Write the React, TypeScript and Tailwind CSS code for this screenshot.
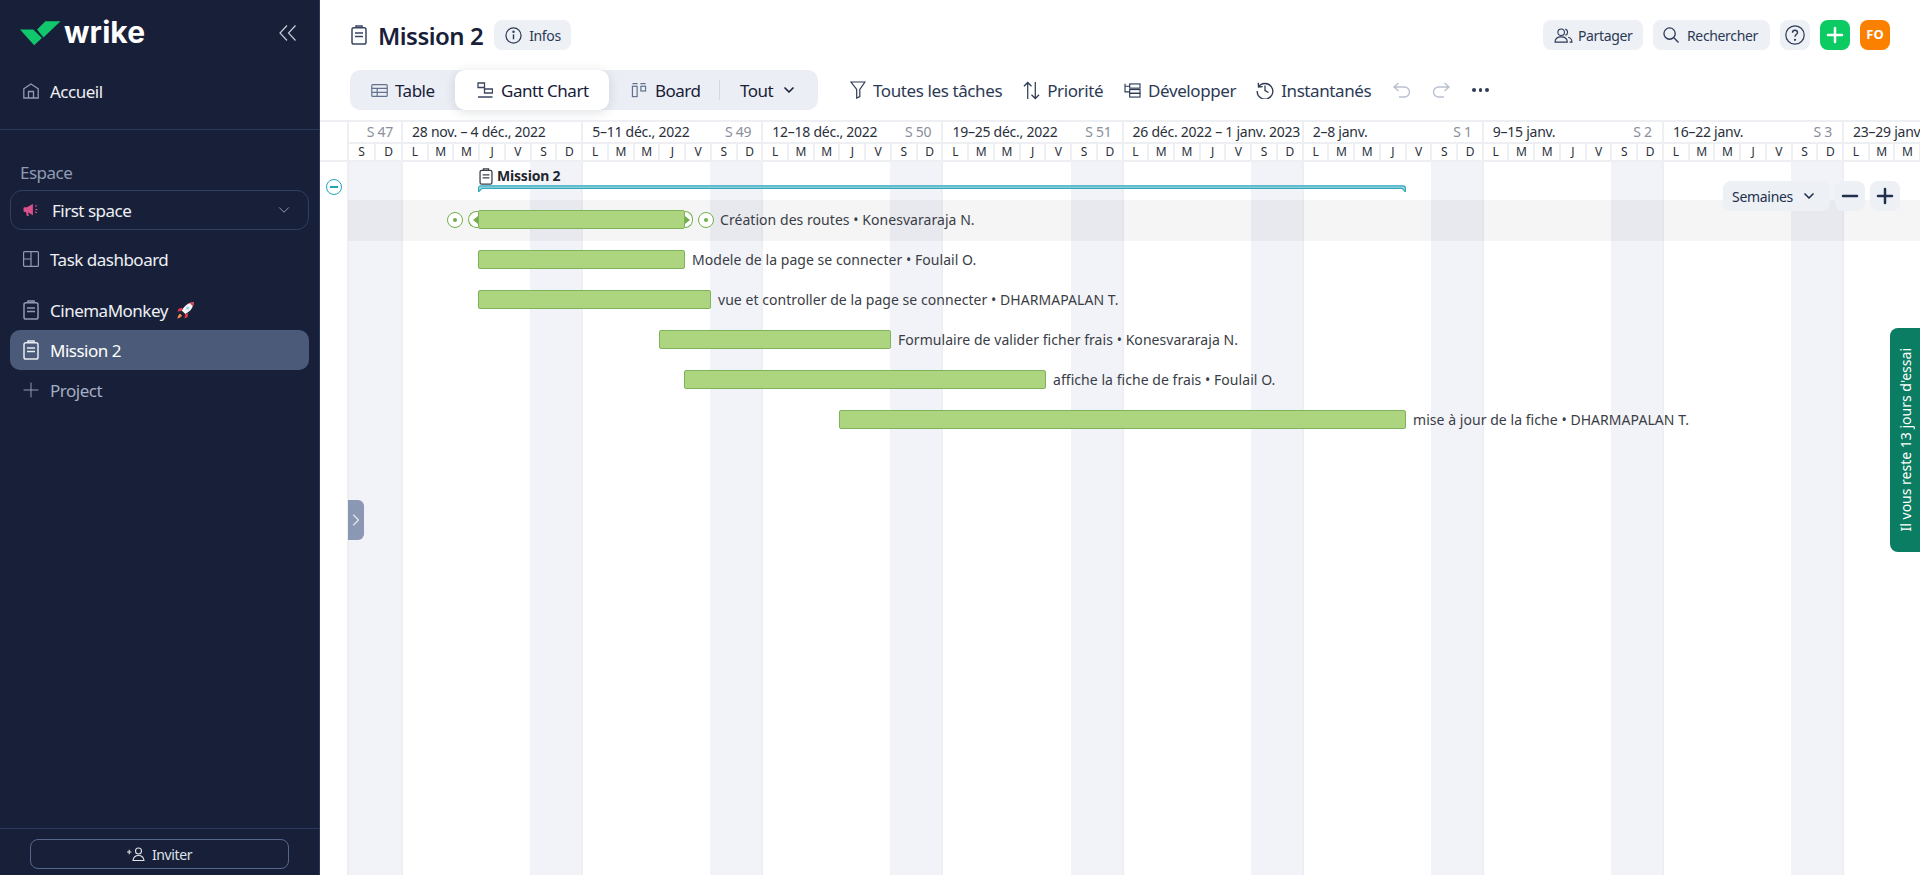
import React from "react";
import { ChevronDown, ChevronRight, Plus, Minus } from "lucide-react";

const F = "[font-family:'Noto_Sans','Open_Sans',sans-serif]";

const Clip = ({ className = "" }: { className?: string }) => (
  <svg viewBox="0 0 16 20" className={className} fill="none" stroke="currentColor" strokeWidth="1.5">
    <rect x="1" y="2.800" width="14" height="16.200" rx="1.800" />
    <path d="M5 2.800V1h6v1.800M4 8h8M4 11.500h8" />
  </svg>
);

const Rocket = () => (
  <svg viewBox="0 0 20 20" className="w-[19px] h-[19px]">
    <path d="M18.6 1.2c-4.3.2-8 2.2-10.4 5.6L6 10l3.8 3.8 3.200-2.200c3.400-2.400 5.400-6.100 5.600-10.400z" fill="#f3f4f6" />
    <path d="M18.600 1.200c-1.500.1-2.900.4-4.200 1l3.200 3.200c.6-1.300.9-2.700 1-4.200z" fill="#e8394d" />
    <path d="M7 7 3 8l-1.500 3 4.500-.5zM13 13l-1 4-3 1.500.5-4.500z" fill="#e8394d" />
    <circle cx="12.300" cy="7.600" r="1.700" fill="#9bd0ea" />
    <path d="M4.500 13.500c-1.500.5-2.500 2-3 4.800 2.800-.5 4.300-1.500 4.800-3z" fill="#f58a4b" />
  </svg>
);

const Megaphone = () => (
  <svg viewBox="0 0 18 16" className="w-[17px] h-[15px]" fill="#d8518a">
    <path d="M10.500 1 4 4.500H1.500A1 1 0 0 0 .5 5.500v3a1 1 0 0 0 1 1H3l1.200 4.500 2-.5-1-3.600 5.300 3.100z" />
    <path d="M12.500 3.200l2-1 .5.900-2 1zM13 6.300h2.500v1.200H13zM12.500 9.800l.5-.9 2 1-.5.900z" />
  </svg>
);

const WrikeLogo = () => (
  <div className="flex items-center gap-[3px]">
    <svg viewBox="0 0 42 26" className="w-[41px] h-[26px]">
      <path d="M0 9.500h13.500l9 8.500-8 7.500z" fill="#10c76c" />
      <path d="M17.500 9.500 26 1h15.500L24 17.500z" fill="#10c76c" />
    </svg>
    <span className="text-white text-[30px] font-bold leading-none [font-family:Inter,sans-serif] tracking-[0.1px] -mt-[2px]">wrike</span>
  </div>
);

const NavRow = ({ icon, label, active, muted, after }: { icon: React.ReactNode; label: string; active?: boolean; muted?: boolean; after?: React.ReactNode }) => (
  <div className={`flex items-center h-10 mx-[10px] pl-[11px] rounded-[10px] ${active ? "bg-[#4a5a78] text-white" : muted ? "text-[#a4aec2]" : "text-[#eef0f5]"}`}>
    <span className={`w-[19px] flex justify-center mr-[10px] ${active ? "text-[#e8ebf1]" : "text-[#8f9bb3]"}`}>{icon}</span>
    <span className="text-[17px] tracking-[-0.5px] pt-px">{label}</span>
    {after && <span className="ml-2">{after}</span>}
  </div>
);

const Sidebar = () => (
  <aside className="w-[320px] shrink-0 h-full bg-[#182039] border-r border-[#2c3b5c] flex flex-col">
    <div className="h-[130px] border-b border-[#2c3b5c] flex flex-col">
      <div className="flex items-center justify-between h-[71px] pl-[20px] pr-[22px] pb-[5px]">
        <WrikeLogo />
        <svg viewBox="0 0 18 16" className="w-[18px] h-[16px]" fill="none" stroke="#c5ccd9" strokeWidth="1.200"><path d="M8 .5 1 8l7 7.500M16.500.5 9.500 8l7 7.500" /></svg>
      </div>
      <NavRow
        label="Accueil"
        icon={<svg viewBox="0 0 16 16" className="w-[16px] h-[16px]" fill="none" stroke="currentColor" strokeWidth="1.300"><path d="M.8 5.800 8 1l7.200 4.800V15H.8zM5.500 15V8.500h5V15" /></svg>}
      />
    </div>
    <div className="pt-[31px] flex-1">
      <div className="pl-[20px] text-[17px] leading-[24px] text-[#8f9bb3] tracking-[-0.5px]">Espace</div>
      <div className="mx-[10px] mt-[5px] h-10 rounded-[12px] border border-[#2f3f60] flex items-center pl-[12px] pr-[15px] text-[#eef0f5]">
        <Megaphone />
        <span className="ml-[12px] text-[17px] tracking-[-0.5px] flex-1 pt-px">First space</span>
        <ChevronDown className="w-[18px] h-[18px] text-[#8f9bb3]" strokeWidth={1.300} />
      </div>
      <div className="mt-[9px]">
        <NavRow
          label="Task dashboard"
          icon={<svg viewBox="0 0 16 16" className="w-[16px] h-[16px]" fill="none" stroke="currentColor" strokeWidth="1.200"><rect x=".6" y=".6" width="14.800" height="14.800" rx="1" /><path d="M8 .6v14.800M.6 8H8" /></svg>}
        />
      </div>
      <div className="mt-[11px]">
        <NavRow label="CinemaMonkey" icon={<Clip className="w-[16px] h-[20px]" />} after={<Rocket />} />
      </div>
      <NavRow label="Mission 2" active icon={<Clip className="w-[16px] h-[20px]" />} />
      <NavRow label="Project" muted icon={<Plus className="w-[24px] h-[24px] shrink-0" strokeWidth={1} />} />
    </div>
    <div className="h-[47px] border-t border-[#2c3b5c] px-[30px] pt-[10px]">
      <div className="h-[30px] rounded-[8px] border border-[#56678a] flex items-center justify-center text-[#dfe3ea] text-[14px] tracking-[-0.4px] gap-[7px]">
        <svg viewBox="0 0 18 14" className="w-[18px] h-[14px]" fill="none" stroke="currentColor" strokeWidth="1.100">
          <path d="M0 5h4.500M2.200 2.800v4.400" />
          <circle cx="11.500" cy="4" r="3" />
          <path d="M6 13.500c.5-3.500 2.500-5 5.500-5s5 1.500 5.500 5z" />
        </svg>
        Inviter
      </div>
    </div>
  </aside>
);

const Pill = ({ children, className = "" }: { children: React.ReactNode; className?: string }) => (
  <div className={`h-[30px] rounded-[8px] bg-[#edf0f5] flex items-center text-[14px] text-[#2c3a55] tracking-[-0.35px] ${className}`}>{children}</div>
);

const TopBar = () => (
  <div className="h-[70px] flex items-start justify-between pt-[20px] pl-[31px] pr-[30px]">
    <div className="flex items-center h-[30px]">
      <Clip className="w-[16px] h-[20px] text-[#3a4660]" />
      <h1 className="ml-[11px] text-[24px] leading-[30px] pt-[2px] font-semibold text-[#182039] tracking-[-0.5px]">Mission 2</h1>
      <Pill className="ml-[11px] w-[77px] pl-[11px] gap-[7px]">
        <svg viewBox="0 0 18 18" className="w-[17px] h-[17px]" fill="none" stroke="#2c3a55" strokeWidth="1.300"><circle cx="9" cy="9" r="8" /><path d="M9 7.800v5.200" strokeWidth="1.500" /><circle cx="9" cy="5" r=".6" fill="#2c3a55" /></svg>
        Infos
      </Pill>
    </div>
    <div className="flex items-center gap-[10px]">
      <Pill className="w-[100px] pl-[11px] gap-[5px]">
        <svg viewBox="0 0 20 16" className="w-[19px] h-[15px]" fill="none" stroke="#2c3a55" strokeWidth="1.200"><circle cx="7.500" cy="4.500" r="3.500" /><path d="M1 15c0-3.500 2.500-5.500 6.500-5.500S14 11.500 14 15z" /><path d="M12 1.200a3.500 3.500 0 0 1 0 6.600M15 9.800c2.500.7 4 2.500 4 5.200h-2.500" /></svg>
        Partager
      </Pill>
      <Pill className="w-[117px] pl-[10px] gap-[8px]">
        <svg viewBox="0 0 17 17" className="w-[16px] h-[16px]" fill="none" stroke="#2c3a55" strokeWidth="1.400"><circle cx="7" cy="7" r="6" /><path d="m11.500 11.500 5 5" /></svg>
        Rechercher
      </Pill>
      <Pill className="w-[30px] justify-center">
        <svg viewBox="0 0 20 20" className="w-[20px] h-[20px]" fill="none" stroke="#2c3a55" strokeWidth="1.200"><circle cx="10" cy="10" r="9.200" /><path d="M7.500 7.800c0-1.500 1.100-2.500 2.500-2.500s2.500 1 2.500 2.300c0 2-2.500 2-2.500 4.200" strokeWidth="1.400" /><circle cx="10" cy="14.800" r=".5" fill="#2c3a55" /></svg>
      </Pill>
      <div className="w-[30px] h-[30px] rounded-[8px] bg-[#0ccb63] flex items-center justify-center">
        <Plus className="w-[24px] h-[24px] text-white" strokeWidth={2.500} />
      </div>
      <div className="w-[30px] h-[30px] rounded-[8px] bg-[#fb8000] flex items-center justify-center text-white text-[13px] font-bold pb-[1px]">FO</div>
    </div>
  </div>
);

const Tab = ({ icon, label, active, className = "" }: { icon: React.ReactNode; label: string; active?: boolean; className?: string }) => (
  <div className={`h-10 flex items-center rounded-[10px] text-[17px] text-[#182039] tracking-[-0.5px] ${active ? "bg-white shadow-[0_2px_12px_rgba(30,40,70,0.14)]" : ""} ${className}`}>
    <span className="text-[#64728f] flex">{icon}</span>
    <span className="pt-[2px]">{label}</span>
  </div>
);

const ToolItem = ({ icon, label, className = "" }: { icon: React.ReactNode; label: string; className?: string }) => (
  <div className={`flex items-center gap-[7px] text-[17px] text-[#2c3a55] tracking-[-0.4px] ${className}`}>
    {icon}
    <span className="pt-[2px]">{label}</span>
  </div>
);

const Toolbar = () => (
  <div className="h-[50px] flex pl-[30px]">
    <div className="w-[468px] h-10 bg-[#ebeef4] rounded-[10px] flex items-center">
      <Tab
        className="w-[105px] pl-[21px] gap-[7px]"
        label="Table"
        icon={<svg viewBox="0 0 18 14" className="w-[17px] h-[13px]" fill="none" stroke="currentColor" strokeWidth="1.300"><rect x=".7" y=".7" width="16.600" height="12.600" rx="1" /><path d="M.7 4.800h16.600M.7 9h16.600M6.500 4.800v8.500" /></svg>}
      />
      <Tab
        active
        className="w-[154px] pl-[22px] gap-[8px]"
        label="Gantt Chart"
        icon={<svg viewBox="0 0 16 16" className="w-[16px] h-[16px] text-[#3a4660]" fill="none" stroke="currentColor" strokeWidth="1.300"><path d="M1 1h6.500v4.500H1zM7.500 7h8v4h-8zM1 15h14.500" /></svg>}
      />
      <Tab
        className="w-[110px] pl-[22px] gap-[8px]"
        label="Board"
        icon={<svg viewBox="0 0 16 16" className="w-[16px] h-[15px]" fill="none" stroke="currentColor" strokeWidth="1.300"><path d="M1 .7h5.500M9.500.7H15" /><rect x="1" y="3.500" width="5" height="11" /><rect x="10" y="3.500" width="5" height="5" /></svg>}
      />
      <div className="w-px h-5 bg-[#d3d8e3]" />
      <div className="flex items-center pl-[20px] text-[17px] text-[#182039] tracking-[-0.5px] gap-[8px]">
        <span className="pt-[2px]">Tout</span>
        <ChevronDown className="w-[16px] h-[16px]" strokeWidth={2.500} />
      </div>
    </div>
    <div className="h-10 flex items-center ml-[32px] text-[#2c3a55]">
      <ToolItem
        label="Toutes les tâches"
        icon={<svg viewBox="0 0 16 18" className="w-[16px] h-[18px]" fill="none" stroke="currentColor" strokeWidth="1.200"><path d="M1 1h14L9.800 8.500V15.500L6.700 17V8.500z" /></svg>}
      />
      <ToolItem
        className="ml-[21px]"
        label="Priorité"
        icon={<svg viewBox="0 0 18 20" className="w-[17px] h-[19px]" fill="none" stroke="currentColor" strokeWidth="1.300"><path d="M5 19V1.500M1 5.500l4-4 4 4M13 1v17.500M9 14.500l4 4 4-4" /></svg>}
      />
      <ToolItem
        className="ml-[21px]"
        label="Développer"
        icon={<svg viewBox="0 0 18 16" className="w-[17px] h-[15px]" fill="none" stroke="currentColor" strokeWidth="1.200"><path d="M1 .8v8.700h5M1 3.500h5" /><rect x="6" y="1" width="11" height="4.500" /><rect x="6" y="7" width="11" height="4" /><rect x="6" y="11" width="11" height="4" /></svg>}
      />
      <ToolItem
        className="ml-[20px]"
        label="Instantanés"
        icon={<svg viewBox="0 0 18 18" className="w-[18px] h-[18px]" fill="none" stroke="currentColor" strokeWidth="1.300"><path d="M2.500 6A7.800 7.800 0 1 1 1.200 10M2.300 1.800 2.500 6l4.200-.3M9 4.500V9.500l3.500 2" /></svg>}
      />
      <svg viewBox="0 0 18 16" className="w-[18px] h-[16px] ml-[22px]" fill="none" stroke="#b8c0cf" strokeWidth="1.400"><path d="M5.500 1 1 5l4.500 4M1 5h10.500a5 5 0 0 1 0 10H6" /></svg>
      <svg viewBox="0 0 18 16" className="w-[18px] h-[16px] ml-[21px] -scale-x-100" fill="none" stroke="#b8c0cf" strokeWidth="1.400"><path d="M5.500 1 1 5l4.500 4M1 5h10.500a5 5 0 0 1 0 10H6" /></svg>
      <div className="ml-[22px] flex gap-[3px]">
        <span className="w-[3.500px] h-[3.500px] rounded-full bg-[#2c3a55]" />
        <span className="w-[3.500px] h-[3.500px] rounded-full bg-[#2c3a55]" />
        <span className="w-[3.500px] h-[3.500px] rounded-full bg-[#2c3a55]" />
      </div>
    </div>
  </div>
);

const DAYS = ["L", "M", "M", "J", "V", "S", "D"];
const WEEK = 180.14;
const weeks = [
  { label: "28 nov. – 4 déc., 2022", s: "" },
  { label: "5–11 déc., 2022", s: "S 49" },
  { label: "12–18 déc., 2022", s: "S 50" },
  { label: "19–25 déc., 2022", s: "S 51" },
  { label: "26 déc. 2022 – 1 janv. 2023", s: "" },
  { label: "2–8 janv.", s: "S 1" },
  { label: "9–15 janv.", s: "S 2" },
  { label: "16–22 janv.", s: "S 3" },
  { label: "23–29 janv.", s: "" },
];

const TimelineHeader = () => (
  <div className="flex border-y-2 border-[#eeeff2] h-[42px] text-[14px] text-[#2a2f3a] overflow-hidden tracking-[-0.25px]">
    <div className="w-[27px] shrink-0" />
    <div className="w-[54px] shrink-0 border-l-2 border-[#eeeff2]">
      <div className="h-[22px] border-b-2 border-[#eeeff2] flex justify-end pr-[8px] items-center text-[#8a8f99] leading-none">S 47</div>
      <div className="flex h-[16px]">
        {["S", "D"].map((d, i) => (
          <div key={i} className="flex-1 text-center text-[12px] leading-[16px] border-r-2 border-[#eeeff2] last:border-r-0">{d}</div>
        ))}
      </div>
    </div>
    {weeks.map((w, i) => (
      <div key={i} className="shrink-0 border-l-2 border-[#eeeff2]" style={{ width: WEEK }}>
        <div className="h-[22px] border-b-2 border-[#eeeff2] flex justify-between pl-[9px] pr-[10px] items-center whitespace-nowrap leading-none">
          <span>{w.label}</span>
          <span className="text-[#8a8f99]">{w.s}</span>
        </div>
        <div className="flex h-[16px]">
          {DAYS.map((d, j) => (
            <div key={j} className="flex-1 text-center text-[12px] leading-[16px] border-r-2 border-[#eeeff2] last:border-r-0">{d}</div>
          ))}
        </div>
      </div>
    ))}
  </div>
);

const Target = () => (
  <span className="w-[16px] h-[16px] rounded-full border-[1.500px] border-[#71ad4c] bg-white flex items-center justify-center">
    <span className="w-[4px] h-[4px] rounded-full bg-[#71ad4c]" />
  </span>
);

const tasks = [
  { left: 158, width: 207, label: "Création des routes • Konesvararaja N.", active: true },
  { left: 158, width: 207, label: "Modele de la page se connecter • Foulail O." },
  { left: 158, width: 233, label: "vue et controller de la page se connecter • DHARMAPALAN T." },
  { left: 339, width: 232, label: "Formulaire de valider ficher frais • Konesvararaja N." },
  { left: 364, width: 362, label: "affiche la fiche de frais • Foulail O." },
  { left: 519, width: 567, label: "mise à jour de la fiche • DHARMAPALAN T." },
];

const Canvas = () => (
  <div className="relative flex-1 overflow-hidden">
    {/* weekend columns */}
    <div className="absolute inset-0 flex">
      <div className="w-[27px] shrink-0" />
      <div className="w-[54px] shrink-0 border-l-2 border-[#eeeff2] bg-[#f2f3f8]" />
      {weeks.map((_, i) => (
        <div key={i} className="shrink-0 flex border-l-2 border-[#eeeff2]" style={{ width: WEEK }}>
          <div className="flex-[5]" />
          <div className="flex-[2] bg-[#f2f3f8]" />
        </div>
      ))}
    </div>

    {/* selected row */}
    <div className="absolute left-[28px] right-0 top-[38px] h-[41px] bg-black/[0.04]" />

    {/* collapse minus */}
    <div className="absolute left-[6px] top-[17px] w-[16px] h-[16px] rounded-full border-[1.500px] border-[#1ea5bd] flex items-center justify-center">
      <span className="w-[8px] h-[1.500px] bg-[#1ea5bd]" />
    </div>

    {/* project summary */}
    <div className="absolute left-[159px] top-[3px] flex items-center gap-[4px] text-[14px] font-bold text-[#22262e] tracking-[-0.2px] leading-[22px]">
      <Clip className="w-[14px] h-[17px] text-[#3a3f4a]" />
      Mission 2
    </div>
    <div className="absolute left-[158px] top-[23px] w-[928px] h-[7px]">
      <svg viewBox="0 0 928 7" className="w-full h-full" fill="none" stroke="#35a9bd" strokeWidth="1.200">
        <path d="M.6 6.800V3Q.6 .8 3 .8h922Q927.400 .8 927.400 3V6.800L924 3.400H4z" fill="#9fd9e3" />
      </svg>
    </div>

    {/* bars */}
    {tasks.map((t, i) => (
      <div key={i} className="absolute h-[19px] flex items-center" style={{ left: t.left, top: 48 + i * 40 }}>
        {t.active && (
          <div className="absolute right-full flex items-center">
            <Target />
            <span className="ml-[5px] w-[10px] h-[17px] rounded-l-full border-[1.500px] border-r-0 border-[#71ad4c] flex items-center justify-end bg-white">
              <span className="w-0 h-0 border-y-[4px] border-y-transparent border-r-[5px] border-r-[#71ad4c]" />
            </span>
          </div>
        )}
        <div className="h-[19px] rounded-[2px] bg-[#add57f] border border-[#7fb35a] shrink-0" style={{ width: t.width }} />
        {t.active && (
          <div className="flex items-center mr-[6px]">
            <span className="w-[8px] h-[17px] rounded-r-full border-[1.500px] border-l-0 border-[#71ad4c] flex items-center bg-white">
              <span className="w-0 h-0 border-y-[4px] border-y-transparent border-l-[5px] border-l-[#71ad4c]" />
            </span>
            <span className="ml-[5px]"><Target /></span>
          </div>
        )}
        <span className={`${t.active ? "" : "ml-[7px]"} text-[14px] text-[#3a3d45] tracking-[0.05px] whitespace-nowrap`}>{t.label}</span>
      </div>
    ))}

    {/* zoom controls */}
    <div className="absolute right-[20px] top-[19px] flex items-center gap-[5px]">
      <div className="h-[30px] w-[107px] rounded-[8px] bg-[#edf0f5] flex items-center pl-[9px] gap-[8px] text-[14px] text-[#22304d] tracking-[-0.3px]">
        Semaines
        <ChevronDown className="w-[16px] h-[16px]" strokeWidth={2.500} />
      </div>
      <div className="w-[30px] h-[30px] rounded-[8px] bg-[#edf0f5] flex items-center justify-center">
        <Minus className="w-[24px] h-[24px] text-[#22304d]" strokeWidth={2.500} />
      </div>
      <div className="w-[30px] h-[30px] rounded-[8px] bg-[#edf0f5] flex items-center justify-center">
        <Plus className="w-[24px] h-[24px] text-[#22304d]" strokeWidth={2.500} />
      </div>
    </div>

    {/* collapse handle */}
    <div className="absolute left-[28px] top-[338px] w-[16px] h-[40px] bg-[#8b98b3] rounded-r-[6px] flex items-center justify-center">
      <ChevronRight className="w-[20px] h-[20px] shrink-0 text-[#e6e9ef]" strokeWidth={1.300} />
    </div>

    {/* trial tab */}
    <div className="absolute right-0 top-[166px] w-[30px] h-[224px] bg-[#0a7d62] rounded-l-[8px] flex items-center justify-center">
      <span className="[writing-mode:vertical-rl] rotate-180 text-white text-[14px] whitespace-nowrap">Il vous reste 13 jours d'essai</span>
    </div>
  </div>
);

export default function App() {
  return (
    <div className={`flex w-[1920px] h-[875px] overflow-hidden bg-white ${F}`}>
      <Sidebar />
      <main className="flex-1 min-w-0 flex flex-col">
        <TopBar />
        <Toolbar />
        <TimelineHeader />
        <Canvas />
      </main>
    </div>
  );
}
